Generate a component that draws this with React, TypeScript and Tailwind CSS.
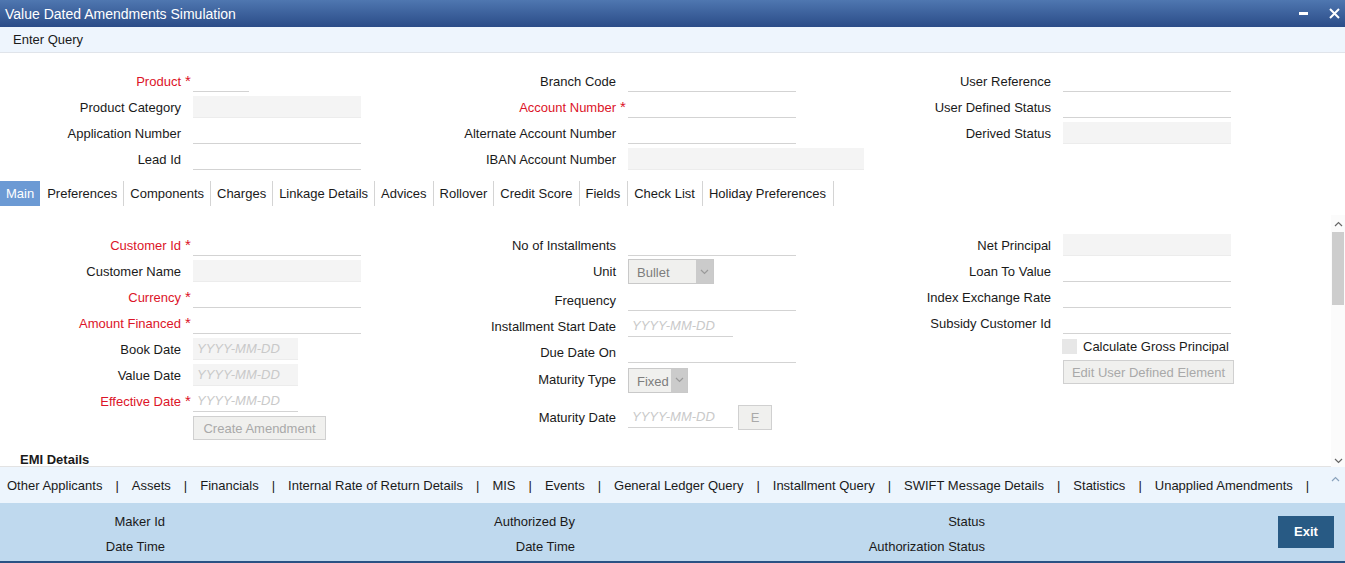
import React from "react";

type InputKind = "line" | "readonly" | "date" | "readonlyDate";

interface FieldProps {
  label: string;
  required?: boolean;
  kind?: InputKind;
  width?: string;
}

const RED = "text-[#dc1428]";

const Label = ({
  label,
  required,
  offset = "mt-[2px]",
}: {
  label: string;
  required?: boolean;
  offset?: string;
}) => (
  <>
    <span
      className={`w-[181px] shrink-0 ${offset} text-right whitespace-nowrap ${
        required ? RED : "text-[#1a1a1a]"
      }`}
    >
      {label}
    </span>
    <span className="w-[12px] shrink-0 flex">
      {required && (
        <span className={`ml-[4px] ${RED} text-[15px] leading-[15px] relative -top-[1px]`}>*</span>
      )}
    </span>
  </>
);

const Input = ({ kind = "line", width = "w-[168px]" }: { kind?: InputKind; width?: string }) => {
  const isReadonly = kind === "readonly" || kind === "readonlyDate";
  const isDate = kind === "date" || kind === "readonlyDate";
  return (
    <div
      className={`${width} h-[22px] shrink-0 border-b ${
        isReadonly ? "bg-[#f4f4f4] border-[#ececec]" : "bg-white border-[#d3d3d3]"
      } flex items-center`}
    >
      {isDate && (
        <span className="pl-[4px] pt-[1px] italic text-[#c9c9c9] text-[13px]">YYYY-MM-DD</span>
      )}
    </div>
  );
};

const Field = ({ label, required, kind, width }: FieldProps) => (
  <div className="flex items-center h-[26px]">
    <Label label={label} required={required} />
    <Input kind={kind} width={width} />
  </div>
);

const Chevron = ({ up, color = "#9a9a9a" }: { up?: boolean; color?: string }) => (
  <svg width="9" height="6" viewBox="0 0 9 6">
    <polyline
      points={up ? "1,5 4.5,1.5 8,5" : "1,1 4.5,4.5 8,1"}
      fill="none"
      stroke={color}
      strokeWidth="1.2"
    />
  </svg>
);

const Select = ({ value, width, arrow }: { value: string; width: string; arrow: string }) => (
  <div className={`flex ${width} h-[25px] border border-[#c9c9c9] bg-[#f0f0ee]`}>
    <span className="flex-1 pl-[8px] pt-[1px] leading-[23px] text-[#7d7d7d]">{value}</span>
    <span className={`${arrow} bg-[#cbcbcb] flex items-center justify-center`}>
      <Chevron />
    </span>
  </div>
);

const DisabledButton = ({ text, className }: { text: string; className: string }) => (
  <div
    className={`${className} flex items-center justify-center pt-[1px] border border-[#d0d0d0] bg-[#f0f0ee] text-[#a9a9a9]`}
  >
    {text}
  </div>
);

const tabs = [
  "Preferences",
  "Components",
  "Charges",
  "Linkage Details",
  "Advices",
  "Rollover",
  "Credit Score",
  "Fields",
  "Check List",
  "Holiday Preferences",
];

const subScreens = [
  "Other Applicants",
  "Assets",
  "Financials",
  "Internal Rate of Return Details",
  "MIS",
  "Events",
  "General Ledger Query",
  "Installment Query",
  "SWIFT Message Details",
  "Statistics",
  "Unapplied Amendments",
];

const App = () => {
  return (
    <div
      className="w-[1345px] h-[563px] overflow-hidden bg-white text-[13px] text-[#1a1a1a]"
      style={{ fontFamily: '"Liberation Sans", Arial, sans-serif' }}
    >
      {/* title bar */}
      <div className="h-[27px] flex items-center bg-linear-to-b from-[#4f77b0] to-[#2b4c88] text-white">
        <span className="pl-[5px] pt-[2px] text-[14px]">Value Dated Amendments Simulation</span>
        <div className="ml-auto flex items-center pr-[5px]">
          <div className="w-[9px] h-[3px] bg-white" />
          <svg className="ml-[21px]" width="11" height="11" viewBox="0 0 11 11">
            <path d="M1 1 L10 10 M10 1 L1 10" stroke="white" strokeWidth="2" />
          </svg>
        </div>
      </div>

      {/* toolbar */}
      <div className="h-[26px] flex items-center bg-[#eef5fd] border-b border-[#e0e4ea] pl-[13px] pt-[1px]">
        Enter Query
      </div>

      {/* header */}
      <div className="grid grid-cols-[435px_435px_435px] pt-[15px] pb-[9px]">
        <div className="flex flex-col">
          <Field label="Product" required width="w-[56px]" />
          <Field label="Product Category" kind="readonly" />
          <Field label="Application Number" />
          <Field label="Lead Id" />
        </div>
        <div className="flex flex-col">
          <Field label="Branch Code" />
          <Field label="Account Number" required />
          <Field label="Alternate Account Number" />
          <Field label="IBAN Account Number" kind="readonly" width="w-[236px]" />
        </div>
        <div className="flex flex-col">
          <Field label="User Reference" />
          <Field label="User Defined Status" />
          <Field label="Derived Status" kind="readonly" />
        </div>
      </div>

      {/* tabs */}
      <div className="h-[25px] flex">
        <div className="px-[6px] pt-[1px] flex items-center bg-[#6c9ad4] text-white">Main</div>
        {tabs.map((t, i) => (
          <div
            key={t}
            className={`${i === 0 ? "pl-[7px]" : "pl-[6px]"} ${
              i > 6 ? "pr-[7px]" : "pr-[6px]"
            } pt-[1px] flex items-center border-r border-[#d4d4d4]`}
          >
            {t}
          </div>
        ))}
      </div>

      {/* main body */}
      <div className="h-[261px] flex">
        <div className="flex-1 overflow-hidden pt-[26px]">
          <div className="grid grid-cols-[435px_435px_435px]">
            <div className="flex flex-col">
              <Field label="Customer Id" required />
              <Field label="Customer Name" kind="readonly" />
              <Field label="Currency" required />
              <Field label="Amount Financed" required />
              <Field label="Book Date" kind="readonlyDate" width="w-[105px]" />
              <Field label="Value Date" kind="readonlyDate" width="w-[105px]" />
              <Field label="Effective Date" required kind="date" width="w-[105px]" />
              <div className="flex pl-[193px] mt-[2px]">
                <DisabledButton text="Create Amendment" className="w-[133px] h-[24px]" />
              </div>
            </div>

            <div className="flex flex-col">
              <Field label="No of Installments" />
              <div className="flex items-center h-[27px]">
                <Label label="Unit" offset="mt-0" />
                <Select value="Bullet" width="w-[86px]" arrow="w-[17px]" />
              </div>
              <div className="flex items-end h-[28px] pb-[2px]">
                <div className="flex items-center h-[22px]">
                  <Label label="Frequency" />
                  <Input />
                </div>
              </div>
              <Field label="Installment Start Date" kind="date" width="w-[105px]" />
              <Field label="Due Date On" />
              <div className="flex items-center h-[30px]">
                <Label label="Maturity Type" offset="-mt-[1px]" />
                <Select value="Fixed" width="w-[60px]" arrow="w-[16px]" />
              </div>
              <div className="flex items-center h-[28px] mt-[8px]">
                <Label label="Maturity Date" />
                <Input kind="date" width="w-[105px]" />
                <DisabledButton text="E" className="ml-[5px] w-[34px] h-[25px]" />
              </div>
            </div>

            <div className="flex flex-col">
              <Field label="Net Principal" kind="readonly" />
              <Field label="Loan To Value" />
              <Field label="Index Exchange Rate" />
              <Field label="Subsidy Customer Id" />
              <div className="flex items-center h-[19px] mt-[1px] pl-[192px]">
                <div className="w-[15px] h-[15px] bg-[#e7e7e7]" />
                <span className="ml-[6px] pt-[1px]">Calculate Gross Principal</span>
              </div>
              <div className="flex pl-[193px] mt-[4px]">
                <DisabledButton text="Edit User Defined Element" className="w-[171px] h-[24px]" />
              </div>
            </div>
          </div>

          <div className="mt-[13px] pl-[20px] pt-[1px] font-bold leading-[12px] border-b border-[#e3e3e3]">
            EMI Details
          </div>
        </div>

        {/* scrollbar */}
        <div className="w-[14px] flex flex-col mt-[9px] bg-[#fbfbfb]">
          <div className="h-[17px] flex items-center justify-center">
            <Chevron up color="#666" />
          </div>
          <div className="h-[73px] mx-[1px] bg-[#cdcdcd]" />
          <div className="flex-1" />
          <div className="h-[12px] flex items-center justify-center">
            <Chevron color="#666" />
          </div>
        </div>
      </div>

      {/* sub-screen links */}
      <div className="h-[36px] flex items-center bg-[#edf5fd] pl-[7px] pt-[1px]">
        {subScreens.map((s) => (
          <React.Fragment key={s}>
            <span>{s}</span>
            <span className="px-[13px]">|</span>
          </React.Fragment>
        ))}
        <div className="ml-auto mr-[5px] self-start mt-[8px]">
          <Chevron up color="#8aa3bd" />
        </div>
      </div>

      {/* audit footer */}
      <div className="h-[60px] flex bg-[#bfd9ee] border-b-2 border-[#2a5284]">
        <div className="grid grid-cols-[410px_410px_410px] pt-[6px]">
          {[
            ["Maker Id", "Date Time"],
            ["Authorized By", "Date Time"],
            ["Status", "Authorization Status"],
          ].map((col, i) => (
            <div key={i} className="flex flex-col">
              {col.map((l) => (
                <div key={l} className="w-[165px] h-[25px] flex items-center justify-end">
                  {l}
                </div>
              ))}
            </div>
          ))}
        </div>
        <div className="ml-auto mr-[11px] self-center">
          <div className="w-[56px] h-[32px] flex items-center justify-center bg-[#285a84] text-white font-bold">
            Exit
          </div>
        </div>
      </div>
    </div>
  );
};

export default App;
